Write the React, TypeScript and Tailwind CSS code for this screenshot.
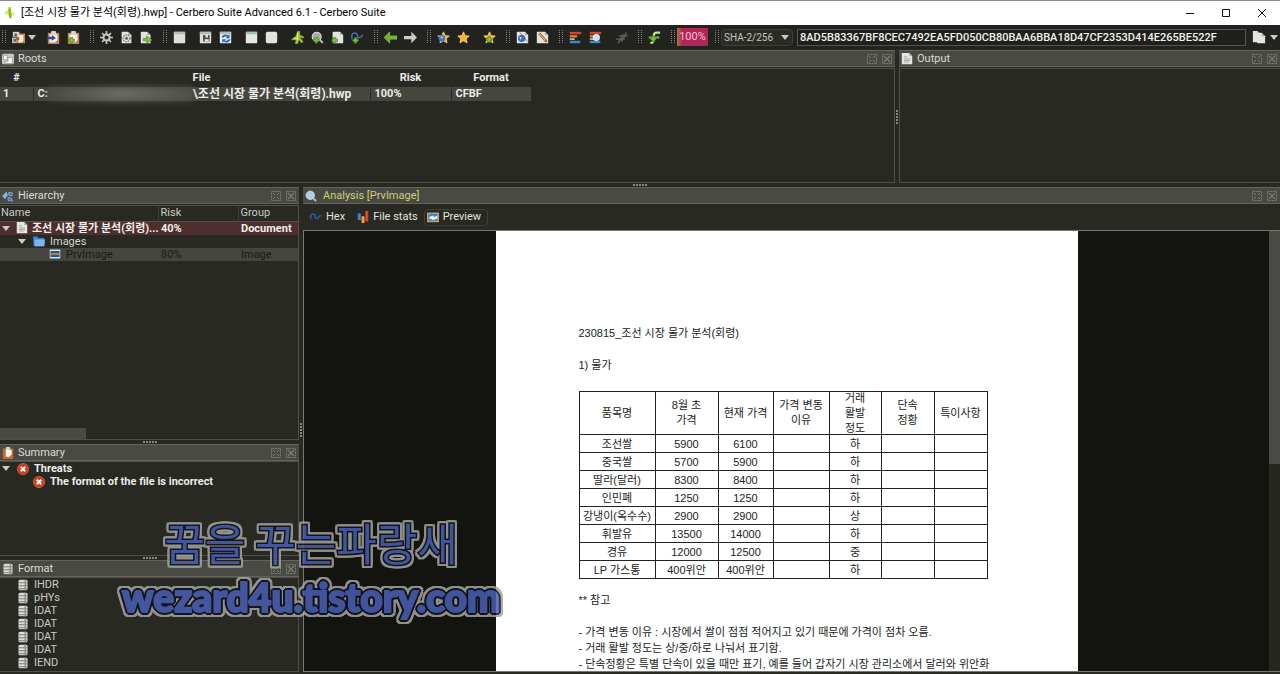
import React from "react";

type IconProps = { name: string; className?: string };

const Page = ({ x = 2, y = 1, w = 12, h = 14 }: { x?: number; y?: number; w?: number; h?: number }) => (
  <g>
    <path d={`M${x} ${y}h${w - 4}l4 4v${h - 4}h-${w}z`} fill="#e4e4e0" />
    <path d={`M${x + w - 4} ${y}v4h4z`} fill="#a9a9a4" />
  </g>
);
const Clip = () => (
  <g>
    <rect x="1" y="2" width="14" height="14" rx="1" fill="#c9824a" />
    <path d="M3 4h10v7l-3 3H3z" fill="#f0efea" />
    <rect x="5" y="0" width="6" height="4" rx="1" fill="#d5d5d0" />
  </g>
);
const Plus = ({ x = 2, y = 8 }: { x?: number; y?: number }) => (
  <path
    d={`M${x + 2} ${y}h3v2h2v3h-2v2h-3v-2h-2v-3h2z`}
    fill="#7cc03a"
    stroke="#2f5d10"
    strokeWidth=".6"
  />
);
const Star = () => (
  <path
    d="M8 1l2.100 4.700 5 .5-3.800 3.400 1.100 5L8 12.100 3.600 14.600l1.100-5L1 6.200l5-.5z"
    fill="#f7b32b"
    stroke="#fbd775"
    strokeWidth="1"
  />
);
const Win = ({ fill = "#dfe0dc", bar = "#b9bab5" }: { fill?: string; bar?: string }) => (
  <g>
    <rect x="1" y="1" width="14" height="14" rx="1" fill={fill} />
    <rect x="1" y="1" width="14" height="3" fill={bar} />
  </g>
);
const Lens = ({ fill = "#a9cdec" }: { fill?: string }) => (
  <g>
    <path d="M10 10l4 4" stroke="#b9bab4" strokeWidth="2.500" strokeLinecap="round" />
    <circle cx="7" cy="7" r="5.500" fill={fill} stroke="#d8dde0" strokeWidth="1.300" />
  </g>
);
const Bars = () => (
  <g>
    <path d="M1 1h14v3H1z" fill="#d6452b" />
    <path d="M1 5h9v3H1z" fill="#e8762e" />
    <path d="M1 9h6v2H1z" fill="#e9c16a" />
    <path d="M1 12h13v3H1z" fill="#3f86d2" />
  </g>
);

const drawings: Record<string, React.ReactNode> = {
  app: (
    <g fill="#a8d62a">
      <path d="M6 0h3l1 4-1 3 2 3-1 5H7L6 11 5 6z" />
      <path d="M1 7l4-3v5l-4 1zM10 6l4 3-1 2-3-2z" fill="#c9e86b" />
      <path d="M8 3v11" stroke="#4f8c14" />
    </g>
  ),
  open: (
    <g>
      <path d="M7 3h9v12H6z" fill="#c9824a" />
      <path d="M8 5h6v7l-2 2H8z" fill="#f0efea" />
      <path d="M1 1h8v6H1z" fill="#d5d5d0" />
      <path d="M0 8h6v7H0z" fill="#b9bab4" />
      <path d="M3 3h3v3H3zM2 10h3v3H2z" fill="#55564f" />
      <path d="M5 8h4v3H5z" fill="#c0532f" />
    </g>
  ),
  clipIn: (
    <g>
      <Clip />
      <path d="M1 7h5V5l5 3.500L6 12v-2H1z" fill="#2250a8" />
    </g>
  ),
  clipAdd: (
    <g>
      <Clip />
      <Plus x={2} y={8} />
    </g>
  ),
  gear: (
    <g>
      <path d="M8 0v16M0 8h16M2.500 2.500l11 11M13.500 2.500l-11 11" stroke="#c5c6c1" strokeWidth="2" />
      <circle cx="8" cy="8" r="5" fill="#c5c6c1" />
      <circle cx="8" cy="8" r="2.500" fill="#2a2a25" />
    </g>
  ),
  pageGear: (
    <g>
      <Page />
      <circle cx="8" cy="9" r="4.200" fill="none" stroke="#8b8c85" strokeWidth="2" strokeDasharray="2 1" />
      <circle cx="8" cy="9" r="2" fill="#6d6e67" />
    </g>
  ),
  pageRun: (
    <g>
      <Page x={1} />
      <path d="M4 9h4V6l7 5-7 4v-3H4z" fill="#7cc03a" stroke="#36671a" strokeWidth=".6" />
    </g>
  ),
  win: <Win />,
  save: (
    <g>
      <Win />
      <path d="M5 5h8v8H5z" fill="#4a4c4a" />
      <path d="M8 5h3v3H8zM7 10h5v3H7z" fill="#e8e8e4" />
    </g>
  ),
  refresh: (
    <g>
      <Win fill="#e6edf7" />
      <path d="M3 8a5 5 0 018-2.500L13 4v5H8l2-1.700A2.500 2.500 0 006 8zM14 10a5 5 0 01-8 3l-2 1.500V10h5l-2 1.500a2.500 2.500 0 004-1z" fill="#2463c4" />
    </g>
  ),
  winGreen: <Win fill="#e6e8e4" bar="#9fbfae" />,
  winPlain: <rect x="1" y="1" width="14" height="14" rx="2" fill="#e2e2e3" />,
  bolt: (
    <g>
      <path d="M8 0h3v5l5 2-1 2-4-1 4 5-2 2-3-4-2 5H5l1-5H0l6-5z" fill="#a9c92d" stroke="#5f7f1a" strokeWidth=".6" />
      <path d="M8 2v9M3 9h5" stroke="#e5f09a" strokeWidth="1.200" />
    </g>
  ),
  lensGreen: (
    <g>
      <Lens fill="#a5ada2" />
      <Plus x={3} y={8} />
    </g>
  ),
  pageAdd: (
    <g>
      <Page x={2} w={13} />
      <Plus x={1} y={8} />
    </g>
  ),
  wave: (
    <g>
      <path d="M1 10V6a3.500 3.500 0 017 0v4M8 6c1 3 4 3 5 0l2-1" stroke="#3f6db8" strokeWidth="1.800" fill="none" />
      <Plus x={2} y={8} />
    </g>
  ),
  left: <path d="M0 8l7-7v5h9v4H7v5z" fill="#6fae34" stroke="#a9d877" strokeWidth=".6" />,
  right: <path d="M16 8L9 1v5H0v4h9v5z" fill="#c9cac6" />,
  starBlue: (
    <g>
      <Star />
      <circle cx="6" cy="9" r="4" fill="#3974cf" />
      <path d="M4 7h3v2H5z" fill="#cfe1fa" />
    </g>
  ),
  star: <Star />,
  starAdd: (
    <g>
      <Star />
      <Plus x={4} y={7} />
    </g>
  ),
  pageBlue: (
    <g>
      <Page x={1} w={14} />
      <circle cx="7" cy="9" r="4.500" fill="#2f6cc4" />
      <path d="M4 7l3 1-1 3z" fill="#dbe8fa" />
      <path d="M5 2l9 11" stroke="#b05a3a" />
    </g>
  ),
  pagePen: (
    <g>
      <Page x={1} w={14} />
      <path d="M4 3l9 10" stroke="#6d4520" strokeWidth="3" />
      <path d="M4 3l8 9" stroke="#f2a93a" strokeWidth="2" />
    </g>
  ),
  bars: <Bars />,
  barsLens: (
    <g>
      <Bars />
      <circle cx="9" cy="8" r="4" fill="#c5e2f8" stroke="#e9f3fb" />
    </g>
  ),
  hash: <path d="M4 15L10 4M8 13l6-11M1 10h11M5 6h11" stroke="#62635c" strokeWidth="1.800" fill="none" />,
  greenS: (
    <g>
      <path d="M15 2h-4Q7 2 7 6v5q0 3-4 4" stroke="#c2dfa4" strokeWidth="2.600" fill="none" />
      <path d="M1 8h13" stroke="#7cc03a" strokeWidth="2.600" />
      <Plus x={3} y={6} />
    </g>
  ),
  copy: (
    <g>
      <Page x={1} y={1} w={9} h={13} />
      <Page x={6} y={3} w={9} h={12} />
    </g>
  ),
  roots: (
    <g>
      <rect x="0" y="1" width="16" height="14" rx="2" fill="#c8c9c5" />
      <path d="M2 3h5v6H2zM8 6h6v8H4v-3h4z" fill="#f4f4f1" stroke="#85867f" strokeWidth=".8" />
    </g>
  ),
  page: (
    <g>
      <Page x={1} w={14} h={15} y={0} />
      <path d="M4 5h4M4 8h8M4 10h8M4 12h6" stroke="#9a9b95" />
    </g>
  ),
  nodes: (
    <g>
      <path d="M0 8l6-6 2 5-4 5z" fill="#86b1e4" />
      <path d="M9 3l5 1-1 4-4-1zM8 10l5 1 1 4-6-1z" fill="#3f73b7" stroke="#b7d0ee" strokeWidth=".8" />
    </g>
  ),
  folder: (
    <g>
      <path d="M0 2h6l1 2h8v11H1z" fill="#3b83d8" />
      <path d="M2 6h14l-1 9H2z" fill="#7db5f2" />
    </g>
  ),
  image: (
    <g>
      <rect x="1" y="2" width="14" height="12" fill="#cfe4f6" />
      <rect x="2" y="4" width="12" height="8" fill="#2f557c" />
      <path d="M2 7h12v2H2z" fill="#d88a4a" />
    </g>
  ),
  clip: (
    <g>
      <rect x="1" y="2" width="14" height="14" rx="1" fill="#c26a2c" />
      <path d="M5 4h8v6l-3 3H5z" fill="#f3f2ed" />
      <rect x="5" y="0" width="6" height="4" rx="1" fill="#d5d5d0" />
    </g>
  ),
  error: (
    <g>
      <circle cx="8" cy="8" r="7.500" fill="#d23a1c" stroke="#e9735a" strokeWidth=".8" />
      <path d="M5 5l6 6M11 5l-6 6" stroke="#fff" strokeWidth="2.600" />
    </g>
  ),
  stack: (
    <g>
      <rect x="2" y="1" width="12" height="14" rx="2" fill="#dcdcd8" />
      <path d="M2 5h12M2 9h12M2 13h12" stroke="#6f706a" strokeWidth="1.200" />
      <path d="M11 1v14" stroke="#8f908a" strokeWidth="2" />
    </g>
  ),
  lens: <Lens />,
  hex: <path d="M1 11V7a3 3 0 016 0v3M7 7c1 4 4 4 5 0l3-1" stroke="#34569a" strokeWidth="2" fill="none" />,
  stats: (
    <g>
      <path d="M1 3h4v9H1z" fill="#3f7fd4" />
      <path d="M6 7h4v9H6z" fill="#f2a13a" />
      <path d="M11 0h4v14h-4z" fill="#d5472b" />
    </g>
  ),
  preview: (
    <g>
      <rect x="0" y="2" width="16" height="13" fill="#d59a3c" />
      <rect x="2" y="4" width="12" height="9" fill="#3a82dc" />
      <path d="M2 9l5-3 3 2 4-2v4l-6 2z" fill="#e6f1fc" />
    </g>
  ),
};

const Icon = ({ name, className = "size-3.5" }: IconProps) => (
  <svg viewBox="0 0 16 16" className={`shrink-0 ${className}`} aria-hidden="true">
    {drawings[name]}
  </svg>
);

const Caret = () => (
  <svg viewBox="0 0 8 5" className="h-[5px] w-2 shrink-0" aria-hidden="true">
    <path d="M0 0h8L4 5z" fill="#c8c9c2" />
  </svg>
);

const Grip = () => (
  <span className="flex w-[13px] shrink-0 justify-end pr-0.5">
    <svg viewBox="0 0 4 14" className="h-3.5 w-1" aria-hidden="true">
      <path d="M.5 0v14M3.500 0v14" stroke="#85867f" strokeDasharray="1 1" />
    </svg>
  </span>
);

const Tool = ({ name, label }: { name: string; label: string }) => (
  <button type="button" aria-label={label} className="flex h-5 w-5 shrink-0 items-center justify-center">
    <Icon name={name} className="size-[13px]" />
  </button>
);

const Gap = () => <span className="w-1.5 shrink-0" />;

const PanelTitle = ({ icon, title, accent = false }: { icon: string; title: string; accent?: boolean }) => (
  <header className="flex h-[17px] shrink-0 items-center gap-1 border-y border-[#62635b] bg-[#494a43] pl-0.5 pr-[3px]">
    <Icon name={icon} className="size-3" />
    <h2 className={accent ? "pl-0.5 text-[#cfd078]" : "text-[#dcdcd6]"}>{title}</h2>
    <span className="ml-auto flex gap-[5px]">
      <button type="button" aria-label={`Float ${title}`}>
        <svg viewBox="0 0 10 10" className="size-2.5" fill="none" stroke="#7d7e76">
          <path d="M.5 .5h9v9h-9z" strokeDasharray="2 1" />
          <path d="M2 8l2-2M8 2L6 4M2 2l2 2M6 6l2 2" />
        </svg>
      </button>
      <button type="button" aria-label={`Close ${title}`}>
        <svg viewBox="0 0 10 10" className="size-2.5" fill="none" stroke="#7d7e76">
          <path d="M.5 .5h9v9h-9z" strokeDasharray="2 1" />
          <path d="M2 2l6 6M8 2L2 8" strokeWidth="1.200" />
        </svg>
      </button>
    </span>
  </header>
);

const HSplit = () => (
  <div className="flex h-1 shrink-0 items-center justify-center">
    <svg viewBox="0 0 14 2" className="h-0.5 w-3.5" aria-hidden="true">
      <path d="M0 .5h14M0 1.500h14" stroke="#85867f" strokeDasharray="2 1" />
    </svg>
  </div>
);
const VSplit = () => (
  <div className="flex w-1 shrink-0 items-center justify-center">
    <svg viewBox="0 0 2 14" className="h-3.5 w-0.5" aria-hidden="true">
      <path d="M.5 0v14M1.500 0v14" stroke="#85867f" strokeDasharray="2 1" />
    </svg>
  </div>
);

const prices = [
  ["조선쌀", "5900", "6100", "", "하", "", ""],
  ["중국쌀", "5700", "5900", "", "하", "", ""],
  ["딸라(달러)", "8300", "8400", "", "하", "", ""],
  ["인민폐", "1250", "1250", "", "하", "", ""],
  ["강냉이(옥수수)", "2900", "2900", "", "상", "", ""],
  ["휘발유", "13500", "14000", "", "하", "", ""],
  ["경유", "12000", "12500", "", "중", "", ""],
  ["LP 가스통", "400위안", "400위안", "", "하", "", ""],
];
const priceHeads = [["품목명"], ["8월 초", "가격"], ["현재 가격"], ["가격 변동", "이유"], ["거래", "활발", "정도"], ["단속", "정황"], ["특이사항"]];
const chunks = ["IHDR", "pHYs", "IDAT", "IDAT", "IDAT", "IDAT", "IEND"];

function TitleBar() {
  return (
    <div className="flex h-[25px] shrink-0 items-center border-t border-[#8a8a8a] bg-white pl-1 text-black">
      <Icon name="app" className="size-3" />
      <h1 className="ml-[5px]">
        [조선 시장 물가 분석(회령).hwp] - Cerbero Suite Advanced 6.1 - Cerbero Suite
      </h1>
      <div className="ml-auto flex">
        <button type="button" aria-label="Minimize" className="flex w-9 justify-center">
          <svg viewBox="0 0 10 10" className="size-2.5" stroke="#111"><path d="M1 5.500h8" /></svg>
        </button>
        <button type="button" aria-label="Maximize" className="flex w-9 justify-center">
          <svg viewBox="0 0 10 10" className="size-2.5" fill="none" stroke="#111"><path d="M1.500 1.500h7v7h-7z" /></svg>
        </button>
        <button type="button" aria-label="Close" className="flex w-9 justify-center">
          <svg viewBox="0 0 10 10" className="size-2.5" stroke="#111"><path d="M1 1l8 8M9 1L1 9" /></svg>
        </button>
      </div>
    </div>
  );
}

function Toolbar() {
  return (
    <div className="flex h-6 shrink-0 items-center bg-[#22231e]">
      <span className="-ml-[5px] flex"><Grip /></span>
      <Tool name="open" label="Open" />
      <button type="button" aria-label="Open menu" className="flex w-[15px] shrink-0"><Caret /></button>
      <Tool name="clipIn" label="Load from clipboard" />
      <Tool name="clipAdd" label="Add from clipboard" />
      <Grip />
      <Tool name="gear" label="Settings" />
      <Tool name="pageGear" label="Script settings" />
      <Tool name="pageRun" label="Run script" />
      <Grip />
      <Tool name="win" label="Window" />
      <Gap />
      <Tool name="save" label="Save" />
      <Tool name="refresh" label="Refresh" />
      <Gap />
      <Tool name="winGreen" label="Layout" />
      <Tool name="winPlain" label="Blank layout" />
      <Gap />
      <Tool name="bolt" label="Actions" />
      <Tool name="lensGreen" label="Find" />
      <Tool name="pageAdd" label="Add file" />
      <Tool name="wave" label="Add filter" />
      <Grip />
      <Tool name="left" label="Back" />
      <Tool name="right" label="Forward" />
      <Grip />
      <Tool name="starBlue" label="Bookmarks" />
      <Tool name="star" label="Bookmark" />
      <Gap />
      <Tool name="starAdd" label="Add bookmark" />
      <Grip />
      <Tool name="pageBlue" label="View page" />
      <Tool name="pagePen" label="Edit page" />
      <Grip />
      <Tool name="bars" label="Layout tree" />
      <Tool name="barsLens" label="Find in layout" />
      <Gap />
      <Tool name="hash" label="Hash" />
      <Grip />
      <Tool name="greenS" label="Add carve" />
      <Grip />
      <span className="flex h-[18px] w-[31px] shrink-0 items-center justify-center bg-linear-to-r from-[#a3743f] via-[#b32458] via-15% to-[#b32458] text-[#f0c3d3]">100%</span>
      <Grip />
      <div className="relative flex shrink-0 items-center">
        <select aria-label="Hash algorithm" className="h-[17px] w-[72px] appearance-none rounded-sm border border-[#3f4039] bg-[#2a2b25] pl-0.5 text-[10px] text-[#c5c6bf]">
          <option>SHA-2/256</option>
        </select>
        <span className="pointer-events-none absolute right-1"><Caret /></span>
      </div>
      <input
        aria-label="Hash value"
        readOnly
        defaultValue="8AD5B83367BF8CEC7492EA5FD050CB80BAA6BBA18D47CF2353D414E265BE522F"
        className="ml-1 h-[17px] min-w-0 flex-1 border border-[#55564e] bg-[#1f201b] px-0.5 font-medium text-[#f2f2ee]"
      />
      <button type="button" aria-label="Copy" className="ml-1.5 flex shrink-0 items-center gap-1 pr-0.5">
        <Icon name="copy" />
        <Caret />
      </button>
    </div>
  );
}

function Roots() {
  return (
    <section className="flex min-w-0 flex-col">
      <PanelTitle icon="roots" title="Roots" />
      <div className="mt-px flex-1 border border-l-0 border-[#4f5048]">
        <table className="w-[531px] table-fixed border-collapse text-left font-bold text-[#ecece8]">
          <colgroup><col className="w-[33px]" /><col className="w-[337px]" /><col className="w-[81px]" /><col className="w-20" /></colgroup>
          <thead>
            <tr className="text-center leading-[18px]">
              <th className="p-0">#</th><th className="p-0">File</th><th className="p-0">Risk</th><th className="p-0">Format</th>
            </tr>
          </thead>
          <tbody>
            <tr className="h-[14px] bg-[#45463f] leading-[14px]">
              <td className="p-0 pl-[3px]">1</td>
              <td className="border-l border-[#2c2d27] p-0 pl-1">
                <span className="flex whitespace-nowrap">
                  C:
                  <span className="h-[14px] w-[145px] bg-linear-to-r from-[#4b4c45] via-[#7a7b74] to-[#55564f] opacity-70 blur-[3px]" />
                  <span className="text-xs leading-[14px]">\조선 시장 물가 분석(회령).hwp</span>
                </span>
              </td>
              <td className="border-l border-[#2c2d27] p-0 pl-1">100%</td>
              <td className="border-l border-[#2c2d27] p-0 pl-1">CFBF</td>
            </tr>
          </tbody>
        </table>
      </div>
    </section>
  );
}

function Hierarchy() {
  return (
    <section className="flex min-h-0 flex-1 flex-col">
      <PanelTitle icon="nodes" title="Hierarchy" />
      <div className="mt-px flex flex-1 flex-col border-r border-t border-[#4f5048]">
        <table className="w-full table-fixed border-collapse text-left">
          <colgroup><col className="w-[158px]" /><col className="w-20" /><col /></colgroup>
          <thead>
            <tr className="h-[15px] border-b border-[#4f5048] leading-[14px] text-[#c9cac3]">
              <th className="p-0 pl-px font-normal">Name</th>
              <th className="border-l border-[#3d3e37] p-0 pl-0.5 font-normal">Risk</th>
              <th className="border-l border-[#3d3e37] p-0 pl-0.5 font-normal">Group</th>
            </tr>
          </thead>
          <tbody className="leading-[13px]">
            <tr className="h-[13px] bg-[#4d2f2f] font-bold text-[#f0eeea]">
              <td className="p-0 pl-0.5">
                <span className="flex items-center gap-1 whitespace-nowrap">
                  <span className="flex w-2.5 shrink-0"><Caret /></span>
                  <Icon name="page" className="size-3" />
                  조선 시장 물가 분석(회령)...
                </span>
              </td>
              <td className="p-0 pl-[3px]">40%</td>
              <td className="p-0 pl-[3px]">Document</td>
            </tr>
            <tr className="h-[13px] text-[#d3d4cd]">
              <td className="p-0 pl-[18px]">
                <span className="flex items-center gap-[5px]">
                  <span className="flex w-2.5 shrink-0"><Caret /></span>
                  <Icon name="folder" className="size-3" />
                  Images
                </span>
              </td>
              <td className="p-0" /><td className="p-0" />
            </tr>
            <tr className="h-[13px] bg-[#45463f] text-[#191a16]">
              <td className="p-0 pl-[49px]">
                <span className="flex items-center gap-[5px]"><Icon name="image" className="size-3" />PrvImage</span>
              </td>
              <td className="p-0 pl-[3px]">80%</td>
              <td className="p-0 pl-[3px]">Image</td>
            </tr>
          </tbody>
        </table>
        <div className="mt-auto flex h-3 border-b border-[#4f5048]"><span className="w-[86px] bg-[#4a4b44]" /></div>
      </div>
    </section>
  );
}

function Summary() {
  return (
    <section className="flex h-[112px] shrink-0 flex-col">
      <PanelTitle icon="clip" title="Summary" />
      <ul className="flex-1 border border-l-0 border-[#4f5048] font-bold leading-[13px] text-[#ecece8]">
        <li className="flex items-center gap-[5px] pl-0.5">
          <span className="flex w-2.5 shrink-0"><Caret /></span>
          <Icon name="error" className="size-3" />Threats
        </li>
        <li className="flex items-center gap-[5px] pl-[33px]"><Icon name="error" className="size-3" />The format of the file is incorrect</li>
      </ul>
    </section>
  );
}

function Format() {
  return (
    <section className="flex h-[112px] shrink-0 flex-col">
      <PanelTitle icon="stack" title="Format" />
      <ul className="flex-1 border border-l-0 border-[#4f5048] leading-[13px] text-[#c9cac3]">
        {chunks.map((c, i) => (
          <li key={i} className="flex items-center gap-[5px] pl-[17px]"><Icon name="stack" className="size-3" />{c}</li>
        ))}
      </ul>
    </section>
  );
}

function Document() {
  return (
    <article className="w-[582px] shrink-0 bg-white px-[83px] pt-[94px] font-['Liberation_Sans','Noto_Sans_CJK_KR',sans-serif] text-[11px] leading-4 text-[#222]">
      <p>230815_조선 시장 물가 분석(회령)</p>
      <p className="mt-4">1) 물가</p>
      <table className="mt-[18px] w-[408px] table-fixed border-collapse text-center">
        <colgroup>
          <col className="w-[76px]" /><col className="w-[63px]" /><col className="w-[55px]" /><col className="w-14" />
          <col className="w-[52px]" /><col className="w-[53px]" /><col className="w-[53px]" />
        </colgroup>
        <thead>
          <tr>
            {priceHeads.map((lines, i) => (
              <th key={i} className="border border-[#222] p-0 font-normal">
                <span className="flex h-[42px] flex-col items-center justify-center whitespace-nowrap leading-[15px]">
                  {lines.map((l) => <span key={l}>{l}</span>)}
                </span>
              </th>
            ))}
          </tr>
        </thead>
        <tbody>
          {prices.map((row) => (
            <tr key={row[0]} className="h-[18px]">
              {row.map((cell, i) => <td key={i} className="whitespace-nowrap border border-[#222] p-0">{cell}</td>)}
            </tr>
          ))}
        </tbody>
      </table>
      <p className="mt-[13px]">** 참고</p>
      <div className="mt-4 whitespace-nowrap">
        <p>- 가격 변동 이유 : 시장에서 쌀이 점점 적어지고 있기 때문에 가격이 점차 오름.</p>
        <p>- 거래 활발 정도는 상/중/하로 나눠서 표기함.</p>
        <p>- 단속정황은 특별 단속이 있을 때만 표기, 예를 들어 갑자기 시장 관리소에서 달러와 위안화</p>
      </div>
    </article>
  );
}

function Analysis() {
  return (
    <section className="flex min-w-0 flex-1 flex-col">
      <PanelTitle icon="lens" title="Analysis [PrvImage]" accent />
      <nav className="flex h-[26px] shrink-0 items-center pl-[7px] text-[#e2e2dc]">
        <button type="button" className="flex items-center gap-1"><Icon name="hex" className="size-3" />Hex</button>
        <button type="button" className="ml-3 flex items-center gap-1"><Icon name="stats" className="size-3" />File stats</button>
        <button type="button" className="ml-1.5 flex h-[17px] items-center gap-1 rounded-sm border border-[#3f4039] pl-0.5 pr-1.5"><Icon name="preview" className="size-3" />Preview</button>
      </nav>
      <div className="flex min-h-0 flex-1 border border-r-0 border-[#77786f] bg-[#131410]">
        <div className="flex min-w-0 flex-1 justify-center overflow-hidden"><Document /></div>
        <div className="w-[11px] shrink-0 bg-[#26271f]"><div className="h-[53%] bg-[#4a4b44]" /></div>
      </div>
    </section>
  );
}

export default function App() {
  return (
    <div className="relative flex h-screen flex-col overflow-hidden bg-[#282923] pb-0.5 font-['Roboto','Noto_Sans_CJK_KR',sans-serif] text-[11px] leading-4">
      <TitleBar />
      <Toolbar />
      <div className="mt-px grid h-[133px] shrink-0 grid-cols-[minmax(0,1fr)_4px_381px]">
        <Roots />
        <VSplit />
        <section className="flex flex-col">
          <PanelTitle icon="page" title="Output" />
          <div className="mt-px flex-1 border border-r-0 border-[#4f5048]" />
        </section>
      </div>
      <HSplit />
      <div className="flex min-h-0 flex-1">
        <div className="flex w-[299px] shrink-0 flex-col">
          <Hierarchy />
          <HSplit />
          <Summary />
          <HSplit />
          <Format />
        </div>
        <VSplit />
        <Analysis />
      </div>
      <div className="pointer-events-none absolute left-[114px] top-[512px] flex w-[394px] flex-col items-center whitespace-nowrap text-[#4a5fb4] opacity-85 [filter:drop-shadow(2px_0_0_#a5a59f)_drop-shadow(-2px_0_0_#a5a59f)_drop-shadow(0_2px_0_#a5a59f)_drop-shadow(0_-2px_0_#a5a59f)]">
        <span className="font-['Noto_Sans_CJK_KR',sans-serif] text-[44px] leading-[60px] [-webkit-text-stroke:3px_#10131c] [paint-order:stroke]">꿈을 꾸는파랑새</span>
        <span className="font-['Lato',sans-serif] text-[39px] font-black leading-[50px] [-webkit-text-stroke:2px_#4a5fb4] [filter:drop-shadow(1px_1px_0_#10131c)_drop-shadow(-1px_-1px_0_#10131c)_drop-shadow(1px_-1px_0_#10131c)_drop-shadow(-1px_1px_0_#10131c)]">wezard4u.tistory.com</span>
      </div>
    </div>
  );
}
